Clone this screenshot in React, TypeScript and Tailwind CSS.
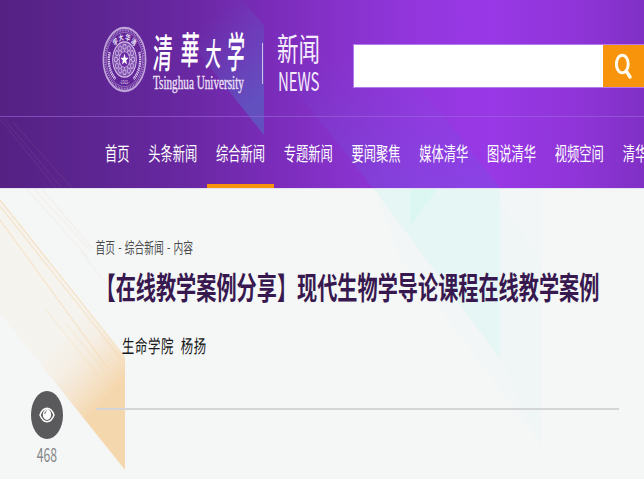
const navItems = ["首页", "头条新闻", "综合新闻", "专题新闻", "要闻聚焦", "媒体清华", "图说清华", "视频空间", "清华人物"];

const calligraphy = [
  { char: "清", style: "w-[19px] text-[19.5px] scale-y-[2.05]" },
  { char: "華", style: "ml-[8px] w-[20px] text-[18.5px] scale-y-[2.05] -translate-y-[2px]" },
  { char: "大", style: "ml-[5px] w-[17px] text-[16px] scale-y-[2] translate-y-px" },
  { char: "学", style: "ml-[5px] w-[18px] text-[17.5px] scale-y-[2.45] -translate-y-px" },
];

function Seal() {
  const petals = Array.from({ length: 12 }, (_, i) => i * 30);
  const motto = [
    { t: "清", a: 38 },
    { t: "华", a: 13 },
    { t: "大", a: -13 },
    { t: "学", a: -38 },
  ];
  return (
    <svg className="h-[67px] w-[45px] shrink-0" viewBox="-22.5 -22.5 45 45" preserveAspectRatio="none" fill="none" stroke="#d8c3ec">
      <circle r="21.2" strokeWidth="1.5" opacity=".8" />
      <circle r="19.6" strokeWidth="1.4" strokeDasharray=".8 .8" opacity=".7" />
      <circle r="18.2" strokeWidth=".6" opacity=".6" />
      <circle r="11.8" fill="#b795d5" fillOpacity=".4" strokeWidth=".9" />
      <path d="M-14.8-5A15.6 15.6 0 0 0-9 13M14.8-5A15.6 15.6 0 0 1 9 13" strokeWidth="2.4" strokeDasharray="1 .5" />
      {petals.map((a) => (
        <g key={a} transform={`rotate(${a})`}>
          <circle cy="-8.6" r="1.6" strokeWidth=".8" opacity=".8" />
          <path d="M0-5V-6.5" strokeWidth=".7" />
        </g>
      ))}
      <circle r="5.3" fill="#6a2ba4" strokeWidth=".6" />
      <path d="M0-4 1.1-1.2 4-1.1 1.7.7 2.5 3.4 0 1.8-2.5 3.4-1.7.7-4-1.1-1.1-1.2Z" fill="#fff" stroke="none" />
      {motto.map((m) => (
        <text key={m.t} transform={`rotate(${m.a})`} y="-13.2" textAnchor="middle" fill="#f1e7fa" stroke="none" fontSize="5" fontWeight="700" fontFamily="Noto Sans CJK SC, sans-serif">
          {m.t}
        </text>
      ))}
      <text y="16.6" textAnchor="middle" fill="#e2d1f2" stroke="none" fontSize="3.4" fontFamily="Liberation Sans, sans-serif">
        -1911-
      </text>
    </svg>
  );
}

function HeaderBackdrop() {
  return (
    <svg className="absolute inset-0 h-full w-full" viewBox="0 0 644 188" preserveAspectRatio="none">
      <defs>
        <linearGradient id="beam" gradientUnits="userSpaceOnUse" x1="200" y1="30" x2="264" y2="95">
          <stop offset="0" stopColor="#5a60c4" stopOpacity="0" />
          <stop offset="1" stopColor="#5a60c4" stopOpacity=".7" />
        </linearGradient>
        <linearGradient id="haze" gradientUnits="userSpaceOnUse" x1="0" y1="60" x2="0" y2="188">
          <stop offset="0" stopColor="#6e58e2" stopOpacity="0" />
          <stop offset="1" stopColor="#6e58e2" stopOpacity=".32" />
        </linearGradient>
      </defs>
      <path d="M157 0H243L264 26V135Z" fill="url(#beam)" />
      <path d="M272 60 373 188H500L399 60Z" fill="url(#haze)" />
      <path d="M0 119 56 188M4 119 62 188M13 122 72 188" stroke="#a36b96" strokeOpacity=".2" fill="none" />
      <path d="M442 0 590 188M520 80 606 188" stroke="#8b46eb" strokeOpacity=".2" fill="none" />
    </svg>
  );
}

function ContentBackdrop() {
  return (
    <svg className="absolute inset-0 h-full w-full" viewBox="0 188 644 291" preserveAspectRatio="none">
      <defs>
        <linearGradient id="amber" gradientUnits="userSpaceOnUse" x1="46" y1="346" x2="104" y2="400">
          <stop offset="0" stopColor="#f5e7d1" stopOpacity=".22" />
          <stop offset=".35" stopColor="#f5e2c8" stopOpacity=".38" />
          <stop offset="1" stopColor="#f5d7ae" />
        </linearGradient>
      </defs>
      <path d="M0 200 125 358V470L0 313Z" fill="url(#amber)" />
      <g fill="none" stroke="#f5d9b0" strokeWidth="1.3">
        <path d="M0 199 125 357" strokeOpacity=".7" />
        <path d="M0 205 120 357" strokeOpacity=".55" />
        <path d="M0 219 108 368" strokeOpacity=".55" />
        <path d="M45 308 103 381M66 323 110 377" strokeOpacity=".3" />
        <path d="M27 188 88 257M34 188 91 250M42 188 92 247M82 252 105 282" stroke="#f0e5dc" strokeOpacity=".4" />
      </g>
      <path d="M376 188H541V445L500 388 400 255Z" fill="#eff5f5" fillOpacity=".5" />
      <path d="M374 188H500V358Z" fill="#e5f6f4" />
      <path d="M410 188H437L410 226Z" fill="#dcf7f2" />
      <path d="M500 358 541 445V260L500 200Z" fill="#edf5f5" fillOpacity=".4" />
    </svg>
  );
}

function SearchBar() {
  return (
    <div className="ml-[33px] mt-[44px] flex h-[44px] w-[291px] border border-r-0 border-[#b57aed]">
      <div className="flex-1 bg-white" />
      <div className="flex w-[41px] items-center justify-center bg-[#f7940b]">
        <svg className="h-[26px] w-[18px]" viewBox="0 0 18 26" fill="none" stroke="#fffaf0">
          <ellipse cx="7.3" cy="11" rx="5.9" ry="8.8" strokeWidth="3" />
          <path d="M11.3 18 15 24" strokeWidth="3.4" strokeLinecap="round" />
        </svg>
      </div>
    </div>
  );
}

export default function App() {
  return (
    <div className="flex h-[479px] w-[644px] flex-col overflow-hidden bg-[#f5f7f7] font-['Noto_Sans_CJK_SC',sans-serif]">
      <header className="relative h-[188px] shrink-0 bg-[linear-gradient(90deg,#552183_0%,#5c2591_14%,#6928a2_29%,#7a2cb9_42%,#8933cf_55%,#9437df_66%,#9838e6_76%,#9035d9_89%,#8030c5_100%)]">
        <HeaderBackdrop />
        <div className="relative flex h-[117px] border-b border-[#a066dc]/60">
          <div className="ml-[102px] mt-[26px] flex h-[67px] w-[218px]">
            <Seal />
            <div className="ml-[6px] flex w-[94px] flex-col text-white">
              <div className="flex h-[49px] items-center">
                {calligraphy.map((c) => (
                  <span key={c.char} className={`shrink-0 -skew-x-6 text-center leading-none font-medium ${c.style}`}>
                    {c.char}
                  </span>
                ))}
              </div>
              <span className="mt-px h-[14px] origin-center scale-y-[1.6] whitespace-nowrap font-['Liberation_Serif',serif] text-[11.2px] leading-[14px] text-[#eee3f8] [-webkit-text-stroke:.2px_#eee3f8]">Tsinghua University</span>
            </div>
            <div className="ml-[15px] mt-[17px] h-[41px] w-px bg-[#d7bdef]" />
            <div className="ml-[14px] flex flex-col text-[#f4ebfc]">
              <span className="mt-[8px] h-[26px] scale-y-[1.5] text-[21.5px] leading-[26px] whitespace-nowrap">新闻</span>
              <span className="mt-[13px] h-[16px] scale-y-[1.7] pl-px text-[15px] leading-[16px] font-normal tracking-[-.1px]">NEWS</span>
            </div>
          </div>
          <SearchBar />
        </div>
        <nav className="relative flex h-[71px] overflow-hidden pl-[95.5px]">
          {navItems.map((item, i) => (
            <a key={item} className={`flex shrink-0 justify-center border-b-4 px-[9.4px] pt-[27px] text-white ${i === 2 ? "border-[#f7940b]" : "border-transparent"}`}>
              <span className="h-[18px] scale-y-[1.55] text-[12.26px] leading-[18px] whitespace-nowrap">{item}</span>
            </a>
          ))}
        </nav>
      </header>
      <main className="relative flex flex-1 border-t border-[#e7e0f0]">
        <ContentBackdrop />
        <aside className="relative flex w-[95.5px] shrink-0 flex-col items-start pl-[31px] pt-[202px]">
          <div className="flex h-[48px] w-[32px] items-center justify-center rounded-[50%] bg-[#5a5a5c]">
            <svg className="h-[16px] w-[16px]" viewBox="0 0 16 16" fill="none" stroke="#fff">
              <path d="M1 8Q3.5 1.3 8 1.3T15 8Q12.5 14.7 8 14.7T1 8Z" strokeWidth="1.5" />
              <ellipse cx="8" cy="7.5" rx="4.2" ry="5.4" fill="#fff" stroke="none" />
              <path d="M5.8 7Q5.9 4.5 7.7 3.8" stroke="#5a5a5c" strokeWidth=".9" />
            </svg>
          </div>
          <span className="mt-[6px] h-[18px] w-[32px] scale-y-[1.6] text-center text-[12.2px] leading-[18px] text-[#858789]">468</span>
        </aside>
        <article className="relative w-[523.5px]">
          <div className="mt-[50px] h-[16px] scale-y-[1.5] text-[9.75px] leading-[16px] whitespace-nowrap text-[#4a4a4a] [word-spacing:1px]">首页 - 综合新闻 - 内容</div>
          <h1 className="mt-[16px] h-[32px] scale-y-[1.5] text-[20.17px] leading-[32px] font-bold whitespace-nowrap text-[#38194f]">【在线教学案例分享】现代生物学导论课程在线教学案例</h1>
          <p className="mt-[33px] h-[18px] scale-y-[1.5] pl-[26.5px] text-[12.4px] leading-[18px] whitespace-nowrap tracking-[.6px] text-[#161616] [word-spacing:3.5px]">
            <span className="inline-block -skew-x-3">生命学院 杨扬</span>
          </p>
          <hr className="mt-[54px] border-t-2 border-[#d3d5d7]" />
        </article>
      </main>
    </div>
  );
}
